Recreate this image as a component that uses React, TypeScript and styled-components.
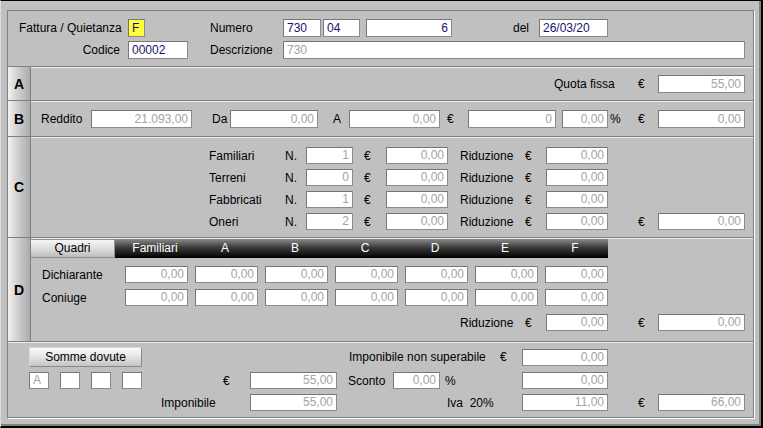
import styled, { createGlobalStyle } from "styled-components";

const Global = createGlobalStyle`
  html, body {
    margin: 0;
    padding: 0;
    background: #c0c0c0;
  }
  body {
    font-family: "Liberation Sans", Arial, sans-serif;
    font-size: 12px;
    color: #000;
  }
`;

const Frame = styled.div`
  box-sizing: border-box;
  width: 763px;
  height: 428px;
  background: #c0c0c0;
  border-top: 1px solid #000;
  border-left: 1px solid #dcdcdc;
  border-right: 2px solid #000;
  border-bottom: 2px solid #000;
  box-shadow: inset -2px -2px 0 #808080;
  padding: 9px 0 0 6px;
`;

const Group = styled.div`
  box-sizing: border-box;
  width: 747px;
  height: 408px;
  border: 1px solid #808080;
  box-shadow: 1px 1px 0 #fff;
  display: flex;
  flex-direction: column;
`;

const Section = styled.section<{ $h: number; $line?: boolean }>`
  box-sizing: border-box;
  display: flex;
  flex: none;
  height: ${(p) => p.$h}px;
  border-top: ${(p) => (p.$line ? "1px solid #808080" : "none")};
  box-shadow: ${(p) => (p.$line ? "inset 0 1px 0 #ececec" : "none")};
`;

const Tab = styled.div`
  flex: none;
  box-sizing: border-box;
  width: 23px;
  border-right: 1px solid #808080;
  background: linear-gradient(to right, #f2f2f2 0%, #d6d6d6 35%, #ababab 100%);
  display: flex;
  align-items: center;
  justify-content: center;
  font-weight: bold;
  font-size: 14px;
`;

const Body = styled.div<{ $pt?: number; $center?: boolean }>`
  flex: 1;
  display: flex;
  flex-direction: column;
  justify-content: ${(p) => (p.$center ? "center" : "flex-start")};
  padding-top: ${(p) => p.$pt ?? 0}px;
`;

const Row = styled.div<{ $h?: number; $mt?: number }>`
  display: flex;
  align-items: center;
  height: ${(p) => p.$h ?? 17}px;
  margin-top: ${(p) => p.$mt ?? 0}px;
  flex: none;
`;

const Lbl = styled.span<{ $w: number; $ml?: number; $right?: boolean }>`
  flex: none;
  box-sizing: border-box;
  width: ${(p) => p.$w}px;
  margin-left: ${(p) => p.$ml ?? 0}px;
  text-align: ${(p) => (p.$right ? "right" : "left")};
  white-space: nowrap;
  font-size: 12px;
  color: #000;
`;

const Field = styled.div<{
  $w: number;
  $ml?: number;
  $h?: number;
  $left?: boolean;
  $ink?: boolean;
  $bg?: string;
}>`
  flex: none;
  box-sizing: border-box;
  width: ${(p) => p.$w}px;
  height: ${(p) => p.$h ?? 17}px;
  margin-left: ${(p) => p.$ml ?? 0}px;
  background: ${(p) => p.$bg ?? "#fff"};
  border: 1px solid #8c8c8c;
  border-top-color: #767676;
  border-left-color: #767676;
  color: ${(p) => (p.$ink ? "#14146e" : "#a4a4a4")};
  text-align: ${(p) => (p.$left ? "left" : "right")};
  padding: 0 3px;
  line-height: ${(p) => (p.$h ?? 17) - 2}px;
  font-size: 12px;
  white-space: nowrap;
  overflow: hidden;
`;

const HeadBar = styled.div`
  display: flex;
  height: 19px;
  margin-top: 1px;
  flex: none;
`;

const QuadriCell = styled.div`
  box-sizing: border-box;
  width: 84px;
  border: 1px solid #909090;
  border-left: none;
  background: linear-gradient(to bottom, #f6f6f6 0%, #d8d8d8 60%, #bcbcbc 100%);
  text-align: center;
  line-height: 17px;
`;

const DarkBar = styled.div`
  width: 493px;
  display: flex;
  padding-left: 5px;
  box-sizing: border-box;
  overflow: hidden;
  background: linear-gradient(to bottom, #8a8a8a 0%, #3a3a3a 45%, #000 100%);
`;

const ColHead = styled.div`
  flex: none;
  width: 70px;
  text-align: center;
  color: #fff;
  line-height: 18px;
`;

const Button = styled.button`
  flex: none;
  box-sizing: border-box;
  width: 113px;
  height: 20px;
  margin-left: 21px;
  padding: 0;
  font-family: "Liberation Sans", Arial, sans-serif;
  font-size: 12px;
  color: #000;
  border: 1px solid #8a8a8a;
  border-top-color: #d8d8d8;
  border-left-color: #d8d8d8;
  background: linear-gradient(to bottom, #fbfbfb 0%, #e4e4e4 50%, #c4c4c4 100%);
`;

const Total = ({ ml, value }: { ml: number; value: string }) => (
  <>
    <Lbl $w={20} $ml={ml}>€</Lbl>
    <Field $w={87}>{value}</Field>
  </>
);

const cRows = [
  { label: "Familiari", n: "1" },
  { label: "Terreni", n: "0" },
  { label: "Fabbricati", n: "1" },
  { label: "Oneri", n: "2" },
];

const cols = ["Familiari", "A", "B", "C", "D", "E", "F"];

const DRow = ({ label, mt }: { label: string; mt: number }) => (
  <Row $mt={mt}>
    <Lbl $w={83} $ml={11}>{label}</Lbl>
    {cols.map((c, i) => (
      <Field key={c} $w={63} $ml={i ? 7 : 0}>0,00</Field>
    ))}
  </Row>
);

export default function App() {
  return (
    <>
      <Global />
      <Frame>
        <Group>
          <Section $h={55}>
            <Body $pt={8}>
              <Row $h={18}>
                <Lbl $w={109} $ml={11}>Fattura / Quietanza</Lbl>
                <Field $w={17} $h={18} $left $ink $bg="#ffff3c">F</Field>
                <Lbl $w={73} $ml={65}>Numero</Lbl>
                <Field $w={38} $h={18} $left $ink>730</Field>
                <Field $w={37} $h={18} $ml={2} $left $ink>04</Field>
                <Field $w={86} $h={18} $ml={6} $ink>6</Field>
                <Lbl $w={26} $ml={61}>del</Lbl>
                <Field $w={69} $h={18} $left $ink>26/03/20</Field>
              </Row>
              <Row $h={18} $mt={4}>
                <Lbl $w={101} $ml={11} $right>Codice</Lbl>
                <Field $w={60} $h={18} $ml={8} $left $ink>00002</Field>
                <Lbl $w={73} $ml={22}>Descrizione</Lbl>
                <Field $w={462} $h={18} $left>730</Field>
              </Row>
            </Body>
          </Section>

          <Section $h={34} $line>
            <Tab>A</Tab>
            <Body $center>
              <Row $h={18}>
                <Lbl $w={84} $ml={523}>Quota fissa</Lbl>
                <Lbl $w={20}>€</Lbl>
                <Field $w={87} $h={18}>55,00</Field>
              </Row>
            </Body>
          </Section>

          <Section $h={36} $line>
            <Tab>B</Tab>
            <Body $center>
              <Row $h={18}>
                <Lbl $w={50} $ml={10}>Reddito</Lbl>
                <Field $w={101} $h={18}>21.093,00</Field>
                <Lbl $w={18} $ml={20}>Da</Lbl>
                <Field $w={88} $h={18}>0,00</Field>
                <Lbl $w={16} $ml={15}>A</Lbl>
                <Field $w={91} $h={18}>0,00</Field>
                <Lbl $w={21} $ml={7}>€</Lbl>
                <Field $w={88} $h={18}>0</Field>
                <Field $w={46} $h={18} $ml={6}>0,00</Field>
                <Lbl $w={28} $ml={2}>%</Lbl>
                <Lbl $w={20}>€</Lbl>
                <Field $w={87} $h={18}>0,00</Field>
              </Row>
            </Body>
          </Section>

          <Section $h={101} $line>
            <Tab>C</Tab>
            <Body $pt={10}>
              {cRows.map((r, i) => (
                <Row key={r.label} $mt={i ? 5 : 0}>
                  <Lbl $w={76} $ml={178}>{r.label}</Lbl>
                  <Lbl $w={21}>N.</Lbl>
                  <Field $w={47}>{r.n}</Field>
                  <Lbl $w={22} $ml={11}>€</Lbl>
                  <Field $w={62}>0,00</Field>
                  <Lbl $w={65} $ml={12}>Riduzione</Lbl>
                  <Lbl $w={21}>€</Lbl>
                  <Field $w={62}>0,00</Field>
                  {i === cRows.length - 1 && <Total ml={30} value="0,00" />}
                </Row>
              ))}
            </Body>
          </Section>

          <Section $h={104} $line>
            <Tab>D</Tab>
            <Body>
              <HeadBar>
                <QuadriCell>Quadri</QuadriCell>
                <DarkBar>
                  {cols.map((c) => (
                    <ColHead key={c}>{c}</ColHead>
                  ))}
                </DarkBar>
              </HeadBar>
              <DRow label="Dichiarante" mt={8} />
              <DRow label="Coniuge" mt={6} />
              <Row $mt={8}>
                <Lbl $w={65} $ml={429}>Riduzione</Lbl>
                <Lbl $w={21}>€</Lbl>
                <Field $w={62}>0,00</Field>
                <Total ml={30} value="0,00" />
              </Row>
            </Body>
          </Section>

          <Section $h={76} $line>
            <Body $pt={5}>
              <Row $h={20}>
                <Button>Somme dovute</Button>
                <Lbl $w={151} $ml={207}>Imponibile non superabile</Lbl>
                <Lbl $w={22}>€</Lbl>
                <Field $w={86}>0,00</Field>
              </Row>
              <Row $mt={5}>
                <Field $w={20} $ml={21} $left>A</Field>
                <Field $w={20} $ml={11} />
                <Field $w={20} $ml={11} />
                <Field $w={20} $ml={11} />
                <Lbl $w={27} $ml={81}>€</Lbl>
                <Field $w={87}>55,00</Field>
                <Lbl $w={45} $ml={11}>Sconto</Lbl>
                <Field $w={47}>0,00</Field>
                <Lbl $w={77} $ml={5}>%</Lbl>
                <Field $w={86}>0,00</Field>
              </Row>
              <Row $mt={5}>
                <Lbl $w={89} $ml={153}>Imponibile</Lbl>
                <Field $w={87}>55,00</Field>
                <Lbl $w={75} $ml={110}>Iva&nbsp;&nbsp;20%</Lbl>
                <Field $w={86}>11,00</Field>
                <Total ml={30} value="66,00" />
              </Row>
            </Body>
          </Section>
        </Group>
      </Frame>
    </>
  );
}
